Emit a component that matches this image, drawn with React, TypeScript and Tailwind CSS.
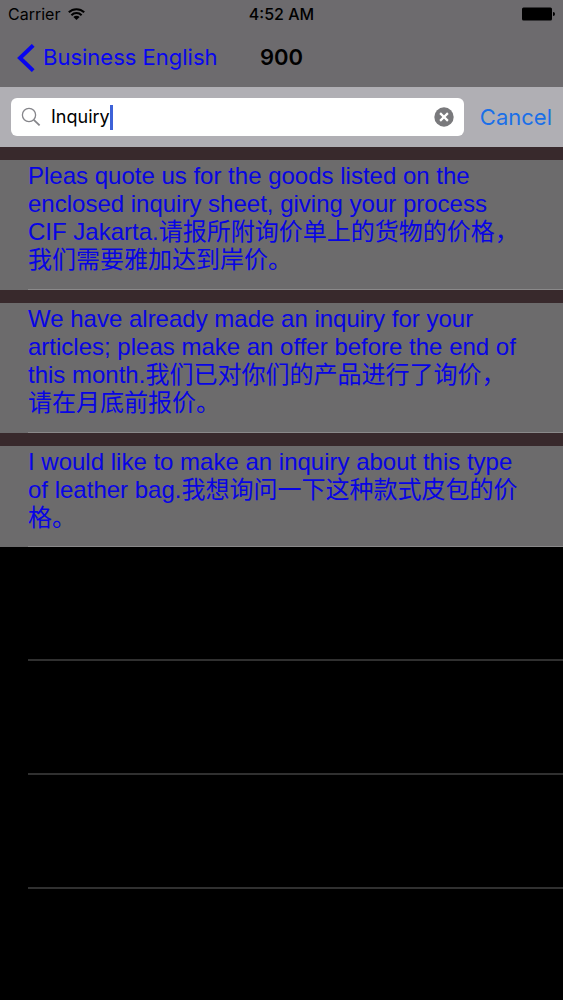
import React, { useState } from "react";

interface Phrase {
  id: number;
  text: string;
}

const phrases: Phrase[] = [
  {
    id: 1,
    text: "Pleas quote us for the goods listed on the enclosed inquiry sheet, giving your process CIF Jakarta.请报所附询价单上的货物的价格，我们需要雅加达到岸价。",
  },
  {
    id: 2,
    text: "We have already made an inquiry for your articles; pleas make an offer before the end of this month.我们已对你们的产品进行了询价，请在月底前报价。",
  },
  {
    id: 3,
    text: "I would like to make an inquiry about this type of leather bag.我想询问一下这种款式皮包的价格。",
  },
];

const emptyRows = [1, 2, 3];

function StatusBar() {
  return (
    <div className="grid grid-cols-3 items-center h-7 px-2 text-base">
      <div className="flex items-center gap-2">
        <span>Carrier</span>
        <svg className="w-[17px] h-3" viewBox="0 0 17 12" fill="none" stroke="black" strokeWidth="2">
          <path d="M0.8 4.3a11 11 0 0 1 15.4 0" />
          <path d="M3.4 7.2a7.2 7.2 0 0 1 10.2 0" />
          <path d="M8.5 12 5.4 9.1a4.4 4.4 0 0 1 6.2 0z" fill="black" stroke="none" />
        </svg>
      </div>
      <span className="text-center font-medium">4:52 AM</span>
      <svg className="justify-self-end w-[33px] h-[14px]" viewBox="0 0 33 14">
        <rect x="0" y="0.5" width="30" height="13" rx="1.5" fill="black" />
        <path d="M31 5a2 2 0 0 1 0 4z" fill="black" />
      </svg>
    </div>
  );
}

function NavBar() {
  return (
    <div className="grid grid-cols-[1fr_auto_1fr] items-center h-[59px] px-4">
      <button className="flex items-center gap-2 text-[#0805f0] text-[22px] whitespace-nowrap cursor-pointer">
        <svg className="w-[19px] h-7 shrink-0" viewBox="0 0 19 28" fill="none" stroke="#0805f0" strokeWidth="4">
          <path d="M17.2 1.4 4 14l13.2 12.6" />
        </svg>
        <span>Business English</span>
      </button>
      <h1 className="text-[22px] font-semibold">900</h1>
    </div>
  );
}

function SearchBar() {
  const [query, setQuery] = useState("Inquiry");

  return (
    <div className="flex items-center gap-4 h-[60px] px-[11px] bg-[#b0afb4]">
      <div className="flex flex-1 items-center h-[38px] px-[10px] bg-white rounded-md">
        <label htmlFor="search" className="mr-[10px]">
          <svg className="w-5 h-5" viewBox="0 0 20 20" fill="none" stroke="#85858a" aria-label="Search">
            <circle cx="8" cy="8" r="6.6" strokeWidth="1.3" />
            <path d="m12.8 12.8 5.8 5.6" strokeWidth="1.8" />
          </svg>
        </label>
        <input
          id="search"
          type="text"
          value={query}
          onChange={(e) => setQuery(e.target.value)}
          className="field-sizing-content text-lg text-black outline-none caret-transparent"
        />
        <span className="w-[3px] h-[25px] bg-[#3d62d8]" />
        <button aria-label="Clear" onClick={() => setQuery("")} className="ml-auto cursor-pointer">
          <svg className="w-5 h-5" viewBox="0 0 20 20">
            <circle cx="10" cy="10" r="9.7" fill="#79797c" />
            <path d="m6.1 6.1 7.8 7.8M13.9 6.1l-7.8 7.8" stroke="white" strokeWidth="2.2" />
          </svg>
        </button>
      </div>
      <button className="text-[#1a6fe8] text-[22px] cursor-pointer">Cancel</button>
    </div>
  );
}

export default function App() {
  return (
    <div className="min-h-screen bg-black text-black font-['Inter',sans-serif]">
      <header className="bg-[#6d6b6e]">
        <StatusBar />
        <NavBar />
        <SearchBar />
      </header>

      {/* Results */}
      <ul className="font-['Liberation_Sans','Noto_Sans_CJK_SC',sans-serif] text-2xl leading-7 text-[#0804e4]">
        {phrases.map((phrase) => (
          <li key={phrase.id} className="group bg-[#6c6b6c] border-t-[13px] border-[#38292c] pl-7">
            <div className="border-b border-[#8a898a]">
              <p className="pt-0.5 pb-[15px] pr-9 group-last:pb-3.5">{phrase.text}</p>
            </div>
          </li>
        ))}
      </ul>

      {/* Blank rows under the results */}
      {emptyRows.map((row) => (
        <div key={row} className="ml-7 h-[114px] border-b-2 border-[#303030]" />
      ))}
    </div>
  );
}
